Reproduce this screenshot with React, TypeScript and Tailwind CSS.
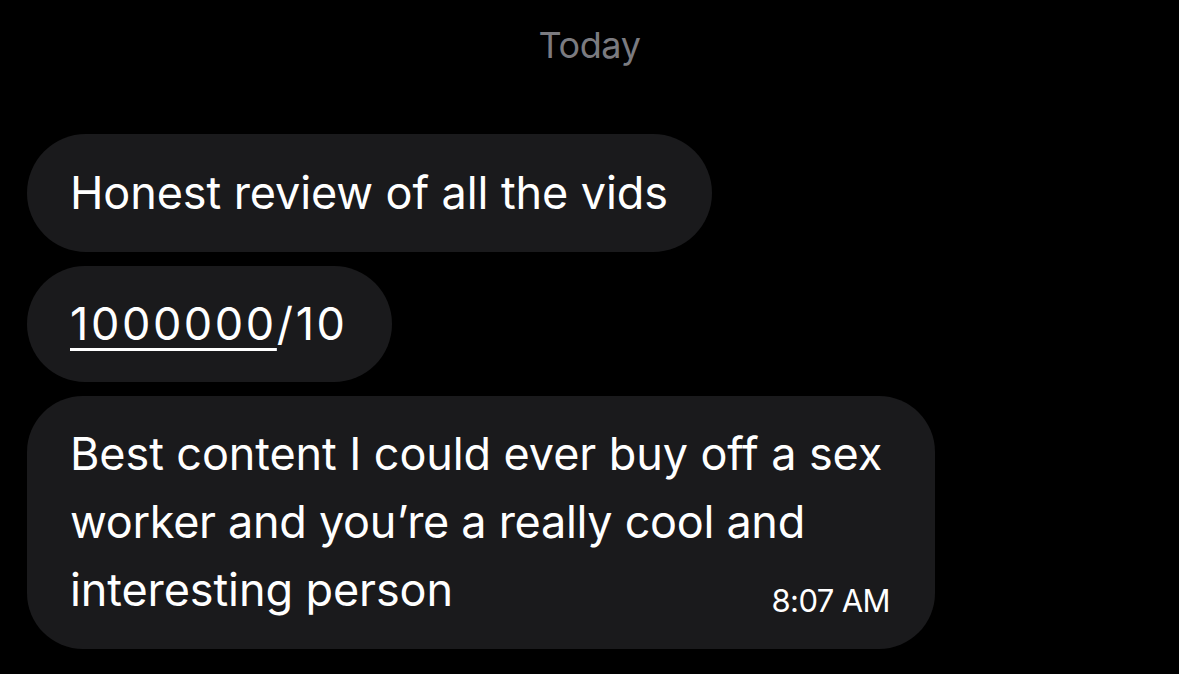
import React from 'react';

const bubble = 'bg-[#1a1a1c] text-white self-start';

const App = () => {
  return (
    <div
      className="w-[1179px] h-[674px] bg-black overflow-hidden flex flex-col"
      style={{ fontFamily: 'Inter, "Noto Sans", sans-serif' }}
    >
      <div className="pt-[23px] text-center text-[36px] leading-[44px] text-[#7b7b80] tracking-[-0.4px]">
        Today
      </div>

      <div className="mt-[67px] pl-[27px] flex flex-col gap-[14px]">
        <div className={`${bubble} h-[118px] rounded-[59px] pl-[43px] pr-[44px] flex items-center text-[45px] tracking-[-0.1px]`}>
          Honest review of all the vids
        </div>

        <div className={`${bubble} h-[116px] rounded-[58px] pl-[43px] pr-[44px] flex items-center text-[45px] tracking-[2.6px]`}>
          <span className="underline decoration-[3px] underline-offset-[8px]">1000000</span>/10
        </div>

        <div className={`${bubble} w-[908px] h-[253px] rounded-[56px] pl-[43px] pr-[45px] pt-[24px] flex flex-col text-[45px] leading-[68px] tracking-[-0.1px]`}>
          <div>Best content I could ever buy off a sex</div>
          <div className="tracking-[-0.3px]">worker and you’re a really cool and</div>
          <div className="flex items-end justify-between">
            <span>interesting person</span>
            <span className="text-[31px] leading-[36px] tracking-[-0.6px] mb-[5px]">8:07 AM</span>
          </div>
        </div>
      </div>
    </div>
  );
};

export default App;
